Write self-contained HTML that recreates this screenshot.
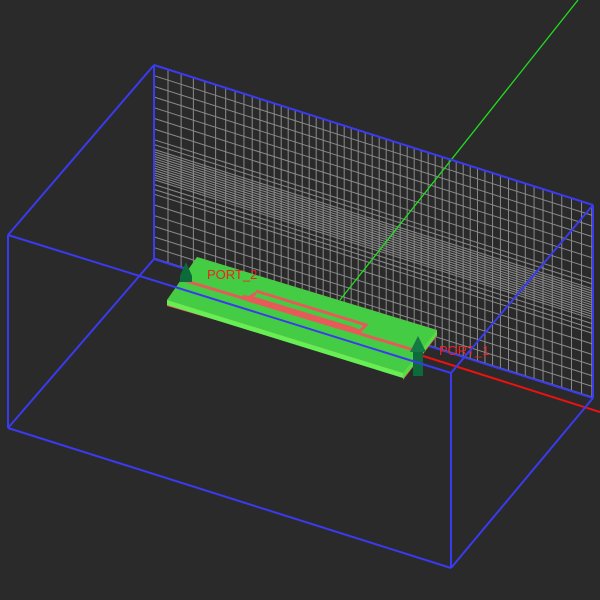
<!DOCTYPE html>
<html><head><meta charset="utf-8"><style>
html,body{margin:0;padding:0;background:#2a2a2a;width:600px;height:600px;overflow:hidden}
svg{display:block}
</style></head><body>
<svg id="s" width="600" height="600" viewBox="0 0 600 600" xmlns="http://www.w3.org/2000/svg">
<rect width="600" height="600" fill="#2a2a2a"/>
<g id="grid" stroke="#8a8a8a" stroke-width="1" fill="none"></g>
<g stroke="#3a3af0" stroke-width="2" fill="none">
<line x1="8" y1="235" x2="154" y2="65"/>
<line x1="8" y1="428" x2="154" y2="259"/>
<line x1="154" y1="259" x2="593" y2="398"/>
</g>
<line x1="340" y1="300" x2="578" y2="0" stroke="#22dd22" stroke-width="1.3"/>
<!-- board -->
<polygon points="167,300 197,257 437,330 437,336 403,380 403,374 167,306" fill="#ee5555"/>
<polygon points="167,300 197,257 437,330 403,373" fill="#44cc44"/>
<polygon points="167,300 403,373 403,378 167,305" fill="#66ee55"/>
<polygon points="403,373 437,330 437,335 403,379" fill="#55dd44"/>
<g stroke="#e85a5a" stroke-width="3" fill="none">
<line x1="183" y1="280" x2="417" y2="351"/>
<polyline points="256,291 366,325 360,331 243,296 248,300 340,328"/>
<polyline points="256,293 250,297 355,329"/>
</g>
<text x="207" y="279" font-family="Liberation Sans,sans-serif" font-size="13" fill="#ee2222">PORT_2</text>
<text x="439" y="355" font-family="Liberation Sans,sans-serif" font-size="13" fill="#ee2222">PORT_1</text>
<line x1="420" y1="355" x2="600" y2="412" stroke="#ee1111" stroke-width="2"/>
<!-- arrows -->
<polygon points="186,262 180,276 180,282 192,282 192,276" fill="#0d6a3a"/>
<rect x="413" y="350" width="10" height="26" fill="#0d6a3a"/>
<polygon points="418,336 410,352 426,352" fill="#137a44"/>
<g stroke="#3a3af0" stroke-width="2" fill="none">
<line x1="154" y1="65" x2="593" y2="205"/>
<line x1="154" y1="65" x2="154" y2="259"/>
<line x1="593" y1="205" x2="593" y2="398"/>
<line x1="8" y1="235" x2="8" y2="428"/>
<line x1="8" y1="235" x2="451" y2="373"/>
<line x1="8" y1="428" x2="451" y2="568"/>
<line x1="451" y1="373" x2="451" y2="568"/>
<line x1="451" y1="373" x2="593" y2="205"/>
<line x1="451" y1="568" x2="593" y2="398"/>
</g>
</svg>
<script>
(function(){
var g=document.getElementById('grid'),ns='http://www.w3.org/2000/svg';
function tp(x){return 65+(x-154)*140/439}
function bt(x){return 259+(x-154)*139/439}
function ln(a,b,c,d){var l=document.createElementNS(ns,'line');l.setAttribute('x1',a);l.setAttribute('y1',b);l.setAttribute('x2',c);l.setAttribute('y2',d);g.appendChild(l);}
var x=154;
while(x<593){ln(x,tp(x),x,bt(x));var f=(x-154)/439;var sp=f<0.25?14-f*28:(f<0.7?7:7+(f-0.7)*12);x+=sp;}
ln(593,tp(593),593,bt(593));
var t=0;
while(t<1){ln(154,65+t*194,593,205+t*193);var d=Math.abs(t-0.5);t+= d<0.08?0.012:(d<0.15?0.025:0.055);}
})();
</script>
</body></html>
